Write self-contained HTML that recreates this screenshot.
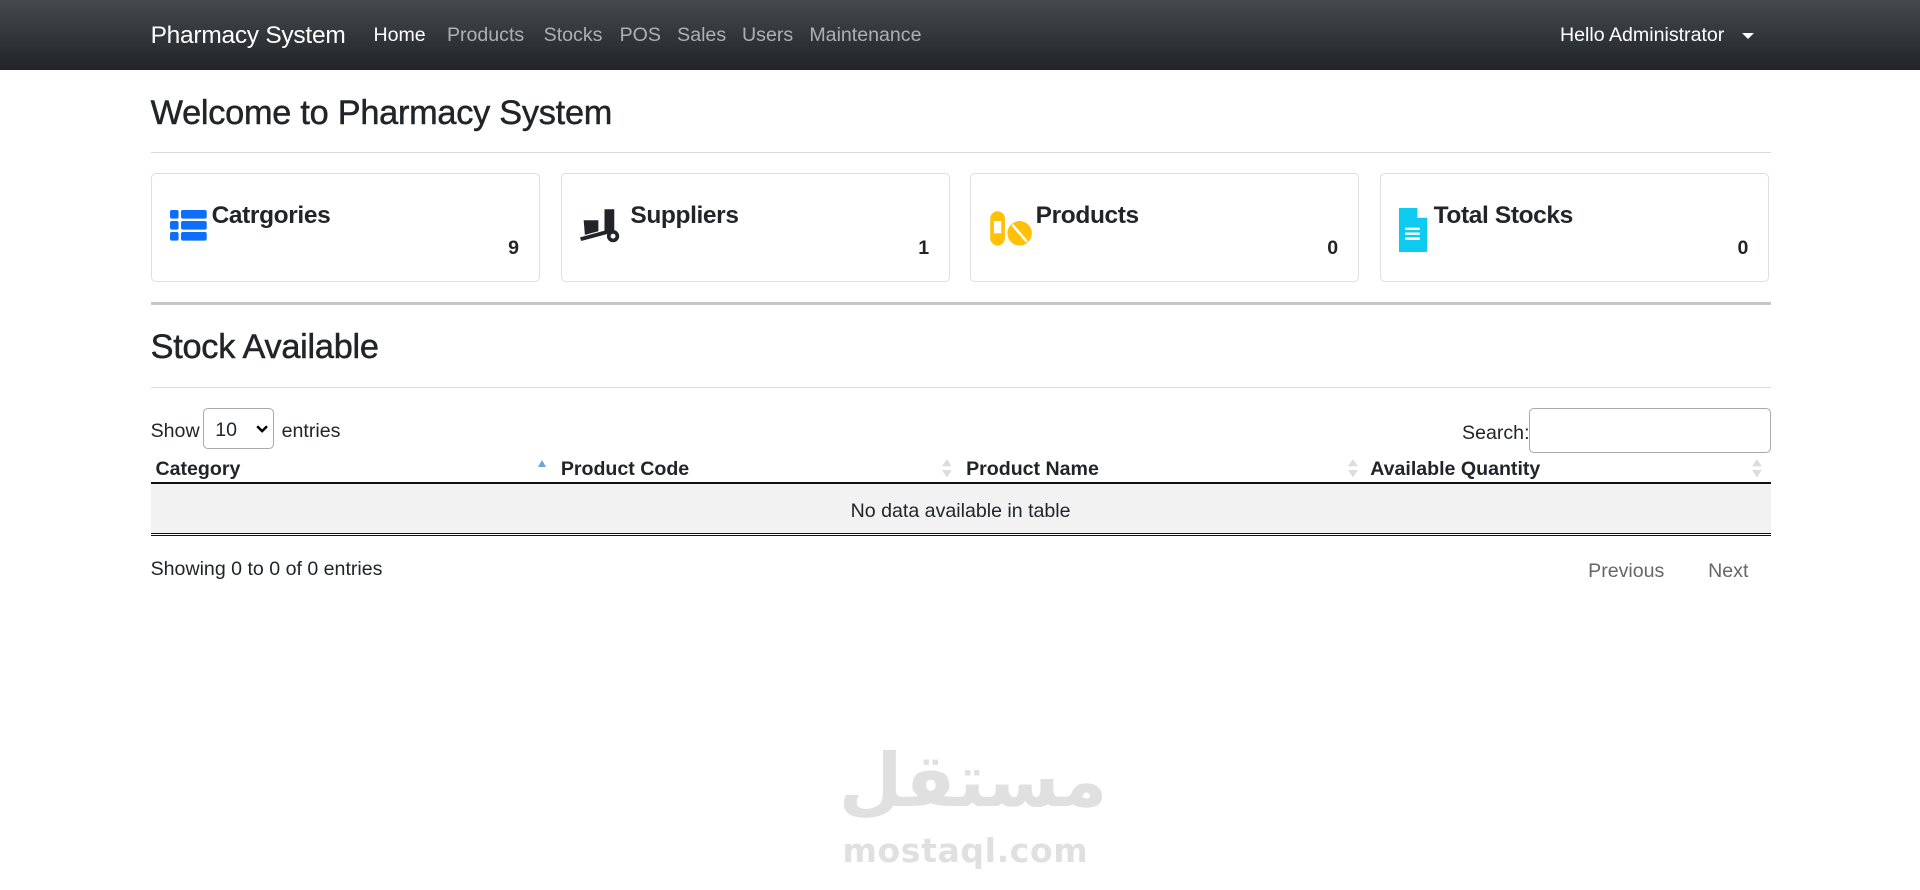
<!DOCTYPE html>
<html><head><meta charset="utf-8"><style>
html{zoom:1.22449}
body{margin:0;width:1568px;height:714px;overflow:hidden;font-family:"Liberation Sans",sans-serif;color:#212529;background:#fff;position:relative;font-size:16px}
.a{position:absolute;white-space:nowrap}
.nav{position:absolute;left:0;top:0;width:1568px;height:57px;background:linear-gradient(#45494e,#212529)}
.nav .l{color:rgba(255,255,255,.6);font-size:16px;top:20px}
.hr{position:absolute;left:123px;width:1323px;height:1px;background:#d9d9d9}
.card{position:absolute;top:141px;width:316px;height:88px;border:1px solid #dfdfdf;border-radius:4px}
.card .t{position:absolute;top:23px;font-size:20px;font-weight:bold;letter-spacing:-0.3px}
.card .n{position:absolute;right:16px;top:52px;font-size:16px;font-weight:bold}
.card svg{position:absolute;left:15px;top:30px}
</style></head><body>
<div class="nav">
<div class="a" style="left:123px;top:18px;color:#fff;font-size:20px;letter-spacing:-0.2px">Pharmacy System</div>
<div class="a l" style="left:305px;color:#fff">Home</div>
<div class="a l" style="left:365px">Products</div>
<div class="a l" style="left:444px">Stocks</div>
<div class="a l" style="left:506px">POS</div>
<div class="a l" style="left:553px">Sales</div>
<div class="a l" style="left:606px">Users</div>
<div class="a l" style="left:661px">Maintenance</div>
<div class="a l" style="left:1274px;color:#fff">Hello Administrator</div>
<div class="a" style="left:1423px;top:27px;width:0;height:0;border-left:5px solid transparent;border-right:5px solid transparent;border-top:5px solid #fff"></div>
</div>
<div class="a" style="left:123px;top:77px;font-size:28px;-webkit-text-stroke:0.4px #212529;letter-spacing:-0.2px">Welcome to Pharmacy System</div>
<div class="hr" style="top:124px"></div>

<div class="card" style="left:123px"><svg width="30" height="26" viewBox="0 0 30 26"><g fill="#0d6efd"><rect x="0" y="0" width="7" height="7" rx="1.5"/><rect x="9" y="0" width="21" height="7" rx="1.5"/><rect x="0" y="9" width="7" height="7" rx="1.5"/><rect x="9" y="9" width="21" height="7" rx="1.5"/><rect x="0" y="18" width="7" height="7" rx="1.5"/><rect x="9" y="18" width="21" height="7" rx="1.5"/></g></svg><div class="t" style="left:49px">Catrgories</div><div class="n">9</div></div>
<div class="card" style="left:458px"><svg width="38" height="30" viewBox="0 0 38 30" style="top:28px"><g fill="#212529"><path d="M20 1h8v20h-8z"/><path d="M3 10h12v9l-11 3z"/><path d="M0 24l22-6 1 3-22 6z"/><circle cx="27" cy="23" r="5"/></g><circle cx="27" cy="23" r="2" fill="#fff"/></svg><div class="t" style="left:56px">Suppliers</div><div class="n">1</div></div>
<div class="card" style="left:792px"><svg width="36" height="30" viewBox="0 0 36 30" style="left:15px;top:30px"><rect x="1" y="1" width="12" height="28" rx="6" fill="#ffc107"/><rect x="4" y="9" width="6" height="10" fill="#fff"/><circle cx="25" cy="19" r="10" fill="#ffc107"/><path d="M19 12l12 14" stroke="#fff" stroke-width="2"/></svg><div class="t" style="left:53px">Products</div><div class="n">0</div></div>
<div class="card" style="left:1127px"><svg width="24" height="36" viewBox="0 0 24 36" style="top:28px"><path d="M0 0h15l8 8v28H0z" fill="#0dcaf0"/><path d="M15 0v8h8" fill="#fff"/><g stroke="#fff" stroke-width="2"><path d="M5 17h12M5 21h12M5 25h12"/></g></svg><div class="t" style="left:43px">Total Stocks</div><div class="n">0</div></div>

<div class="hr" style="top:247px;height:2px;background:#c6c6c6"></div>
<div class="a" style="left:123px;top:268px;font-size:28px;-webkit-text-stroke:0.4px #212529;letter-spacing:-0.2px">Stock Available</div>
<div class="hr" style="top:316px"></div>

<div class="a" style="left:123px;top:343px">Show</div>
<div class="a" style="left:166px;top:333px;width:58px;height:34px;border:1px solid #aaa;border-radius:4px;box-sizing:border-box"><span class="a" style="left:9px;top:8px">10</span><svg class="a" style="left:42px;top:13px" width="10" height="7" viewBox="0 0 10 7"><path d="M1 1l4 4 4-4" stroke="#000" stroke-width="2" fill="none"/></svg></div>
<div class="a" style="left:230px;top:343px">entries</div>
<div class="a" style="left:1194px;top:345px">Search:</div>
<div class="a" style="left:1249px;top:333px;width:197px;height:37px;border:1px solid #aaa;border-radius:4px;box-sizing:border-box"></div>

<div class="a" style="left:127px;top:374px;font-weight:bold">Category</div>
<div class="a" style="left:458px;top:374px;font-weight:bold">Product Code</div>
<div class="a" style="left:789px;top:374px;font-weight:bold">Product Name</div>
<div class="a" style="left:1119px;top:374px;font-weight:bold">Available Quantity</div>
<div class="a" style="left:439px;top:376px;border-left:4px solid transparent;border-right:4px solid transparent;border-bottom:6px solid #6fa3d9"></div>
<svg class="a" style="left:769px;top:375px" width="8" height="15"><path d="M4 0l4 6H0zM4 15l4-6H0z" fill="#ddd"/></svg>
<svg class="a" style="left:1101px;top:375px" width="8" height="15"><path d="M4 0l4 6H0zM4 15l4-6H0z" fill="#ddd"/></svg>
<svg class="a" style="left:1431px;top:375px" width="8" height="15"><path d="M4 0l4 6H0zM4 15l4-6H0z" fill="#ddd"/></svg>
<div class="a" style="left:123px;top:394px;width:1323px;height:1px;background:#111"></div>
<div class="a" style="left:123px;top:395px;width:1323px;height:41px;background:#f2f2f2"></div>
<div class="a" style="left:123px;top:408px;width:1323px;text-align:center">No data available in table</div>
<div class="a" style="left:123px;top:435px;width:1323px;height:1px;background:#111"></div>
<div class="a" style="left:123px;top:437px;width:1323px;height:1px;background:#111"></div>

<div class="a" style="left:123px;top:456px">Showing 0 to 0 of 0 entries</div>
<div class="a" style="left:1297px;top:457px;color:#666">Previous</div>
<div class="a" style="left:1395px;top:457px;color:#666">Next</div>

<div class="a" style="left:685px;top:600px;width:200px;text-align:center;font-family:'DejaVu Sans',sans-serif;font-weight:bold;font-size:60px;color:#e0e0e0;line-height:76px">مستقل</div>
<div class="a" style="left:688px;top:677px;width:192px;text-align:center;font-family:'DejaVu Sans',sans-serif;font-weight:bold;font-size:27px;letter-spacing:0.5px;color:#e0e0e0;line-height:36px">mostaql.com</div>
</body></html>
